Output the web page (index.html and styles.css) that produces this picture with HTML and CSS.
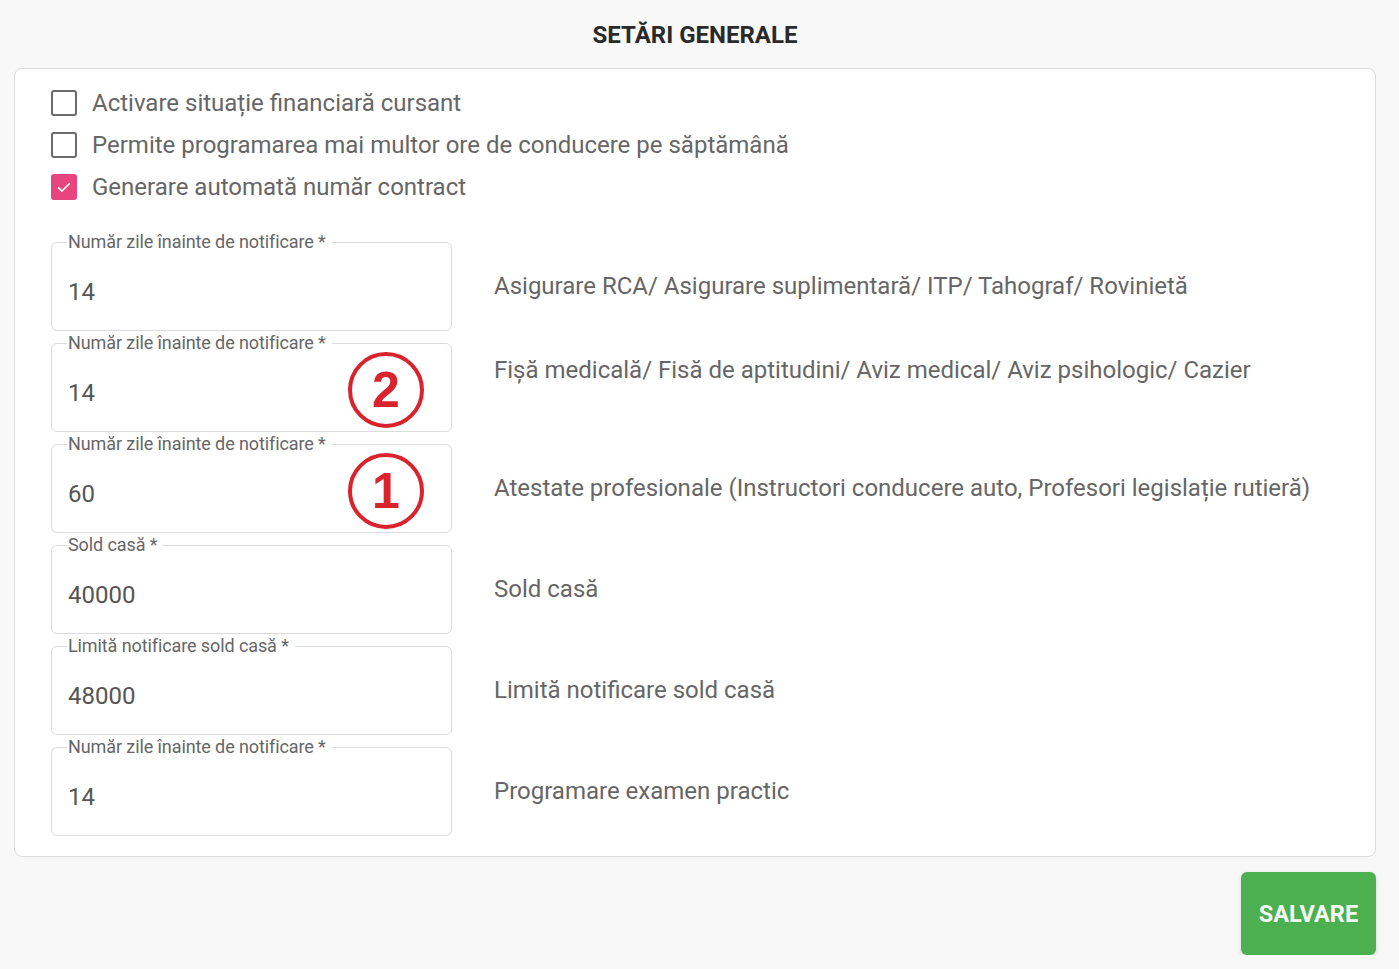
FILE: index.html
```html
<!DOCTYPE html>
<html lang="ro">
<head>
  <meta charset="UTF-8" />
  <title>Setări generale</title>
  <link rel="stylesheet" href="styles.css">
</head>
<body>
  <div class="page">
    <h2 class="title">SETĂRI GENERALE</h2>

    <div class="card">
      <div class="checks">
        <label class="check"><span class="box"></span>Activare situație financiară cursant</label>
        <label class="check"><span class="box"></span>Permite programarea mai multor ore de conducere pe săptămână</label>
        <label class="check"><span class="box checked"><svg viewBox="0 0 24 24" width="20" height="20"><path d="M5 12.5l4.5 4.5L19 7.5" fill="none" stroke="#fff" stroke-width="2"/></svg></span>Generare automată număr contract</label>
      </div>

      <div class="rows">
        <div class="row">
          <fieldset class="field">
            <legend>Număr zile înainte de notificare *</legend>
            <div class="value">14</div>
          </fieldset>
          <div class="desc">Asigurare RCA/ Asigurare suplimentară/ ITP/ Tahograf/ Rovinietă</div>
        </div>

        <div class="row">
          <fieldset class="field">
            <legend>Număr zile înainte de notificare *</legend>
            <div class="value">14</div>
            <span class="mark">2</span>
          </fieldset>
          <div class="desc desc-up">Fișă medicală/ Fisă de aptitudini/ Aviz medical/ Aviz psihologic/ Cazier</div>
        </div>

        <div class="row">
          <fieldset class="field">
            <legend>Număr zile înainte de notificare *</legend>
            <div class="value">60</div>
            <span class="mark">1</span>
          </fieldset>
          <div class="desc">Atestate profesionale (Instructori conducere auto, Profesori legislație rutieră)</div>
        </div>

        <div class="row">
          <fieldset class="field">
            <legend>Sold casă *</legend>
            <div class="value">40000</div>
          </fieldset>
          <div class="desc">Sold casă</div>
        </div>

        <div class="row">
          <fieldset class="field">
            <legend>Limită notificare sold casă *</legend>
            <div class="value">48000</div>
          </fieldset>
          <div class="desc">Limită notificare sold casă</div>
        </div>

        <div class="row">
          <fieldset class="field">
            <legend>Număr zile înainte de notificare *</legend>
            <div class="value">14</div>
          </fieldset>
          <div class="desc">Programare examen practic</div>
        </div>
      </div>
    </div>

    <div class="actions">
      <button class="save">SALVARE</button>
    </div>
  </div>
</body>
</html>
```

FILE: styles.css
```css
* {
  box-sizing: border-box;
  margin: 0;
  padding: 0;
}

body {
  background: #f8f8f8;
  font-family: Roboto, "Liberation Sans", sans-serif;
  color: #666;
}

.page {
  width: 1362px;
  margin-left: 14px;
}

.title {
  text-align: center;
  font-size: 24px;
  font-weight: 700;
  color: #2a2a2a;
  line-height: 28px;
  padding-top: 21px;
  padding-bottom: 19px;
}

.card {
  background: #fff;
  border: 1px solid #dcdcdc;
  border-radius: 8px;
  padding: 13px 36px 20px 36px;
}

/* checkboxes */
.checks {
  display: flex;
  flex-direction: column;
}

.check {
  display: flex;
  align-items: center;
  height: 42px;
  font-size: 24px;
  color: #666;
}

.box {
  width: 26px;
  height: 26px;
  border: 2.5px solid #6a6a6a;
  border-radius: 3px;
  margin-right: 15px;
  display: flex;
  align-items: center;
  justify-content: center;
}

.box.checked {
  background: #e8457f;
  border-color: #e8457f;
}

/* fields */
.rows {
  margin-top: 25px;
  display: flex;
  flex-direction: column;
  gap: 3px;
}

.row {
  display: flex;
  align-items: center;
}

.field {
  position: relative;
  width: 401px;
  border: 1px solid #dcdcdc;
  border-radius: 6px;
  padding: 0 16px 16px 16px;
}

.field legend {
  font-size: 18px;
  line-height: 18px;
  padding: 0 6px 0 1px;
  margin-left: -1px;
  color: #666;
  letter-spacing: -0.1px;
}

.value {
  padding-top: 19px;
  line-height: 44px;
  font-size: 24px;
  color: #555;
}

.desc {
  margin-left: 42px;
  font-size: 24px;
  color: #666;
  padding-top: 8px;
}

.desc-up {
  padding-top: 0;
  padding-bottom: 26px;
}

.mark {
  position: absolute;
  right: 27px;
  top: 0;
  width: 76px;
  height: 76px;
  border: 4px solid #d9232d;
  border-radius: 50%;
  display: flex;
  align-items: center;
  justify-content: center;
  font-family: "Liberation Sans", Arial, sans-serif;
  font-weight: 700;
  font-size: 50px;
  color: #d9232d;
}

/* button */
.actions {
  display: flex;
  justify-content: flex-end;
  margin-top: 15px;
}

.save {
  width: 135px;
  height: 83px;
  background: #4caf50;
  color: #f4fbf4;
  border: none;
  border-radius: 6px;
  font-family: Roboto, "Liberation Sans", sans-serif;
  font-size: 23.5px;
  font-weight: 700;
  box-shadow: 0 2px 4px rgba(0, 0, 0, 0.15);
}
```
